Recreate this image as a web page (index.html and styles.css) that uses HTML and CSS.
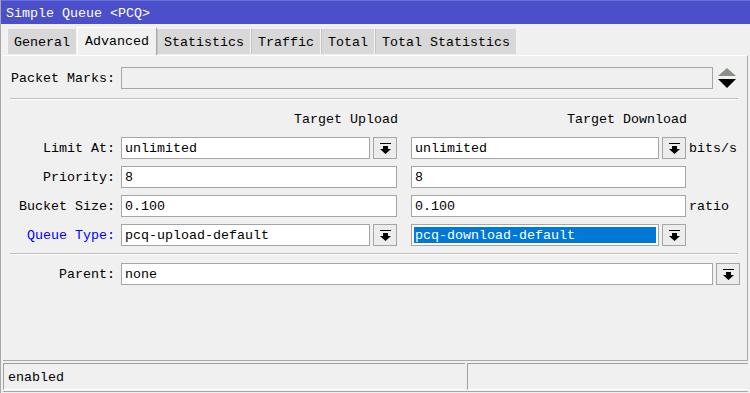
FILE: index.html
```html
<!DOCTYPE html>
<html lang="en">
<head>
    <meta charset="UTF-8">
    <title>Simple Queue &lt;PCQ&gt;</title>
    <link rel="stylesheet" href="styles.css">
</head>
<body>

<div class="window">
    <div class="titlebar">Simple Queue &lt;PCQ&gt;</div>

    <div class="tabs">
        <div class="tab">General</div>
        <div class="tab active">Advanced</div>
        <div class="tab">Statistics</div>
        <div class="tab">Traffic</div>
        <div class="tab">Total</div>
        <div class="tab">Total Statistics</div>
    </div>

    <div class="panel">
        <div class="row">
            <span class="label">Packet Marks:</span>
            <div class="field wide disabled"></div>
            <span class="updown">
                <svg width="18" height="22" viewBox="0 0 18 22">
                    <polygon points="9,1 18,9 0,9" fill="#8a9089"/>
                    <polygon points="0,12 18,12 9,21" fill="#000"/>
                </svg>
            </span>
        </div>

        <div class="sep"></div>

        <div class="row heads">
            <span class="label"></span>
            <span class="head up">Target Upload</span>
            <span class="head down">Target Download</span>
        </div>

        <div class="row">
            <span class="label">Limit At:</span>
            <div class="combo up">
                <div class="field">unlimited</div>
                <span class="btn"><svg width="11" height="11" viewBox="0 0 11 11"><rect x="0" y="0" width="11" height="1"/><rect x="3" y="3" width="5" height="3"/><polygon points="0,6 11,6 5.5,11"/></svg></span>
            </div>
            <div class="combo down">
                <div class="field">unlimited</div>
                <span class="btn"><svg width="11" height="11" viewBox="0 0 11 11"><rect x="0" y="0" width="11" height="1"/><rect x="3" y="3" width="5" height="3"/><polygon points="0,6 11,6 5.5,11"/></svg></span>
            </div>
            <span class="unit">bits/s</span>
        </div>

        <div class="row">
            <span class="label">Priority:</span>
            <div class="field up">8</div>
            <div class="field down">8</div>
        </div>

        <div class="row">
            <span class="label">Bucket Size:</span>
            <div class="field up">0.100</div>
            <div class="field down">0.100</div>
            <span class="unit">ratio</span>
        </div>

        <div class="row">
            <span class="label link">Queue Type:</span>
            <div class="combo up">
                <div class="field">pcq-upload-default</div>
                <span class="btn"><svg width="11" height="11" viewBox="0 0 11 11"><rect x="0" y="0" width="11" height="1"/><rect x="3" y="3" width="5" height="3"/><polygon points="0,6 11,6 5.5,11"/></svg></span>
            </div>
            <div class="combo down">
                <div class="field selected"><span>pcq-download-default</span></div>
                <span class="btn"><svg width="11" height="11" viewBox="0 0 11 11"><rect x="0" y="0" width="11" height="1"/><rect x="3" y="3" width="5" height="3"/><polygon points="0,6 11,6 5.5,11"/></svg></span>
            </div>
        </div>

        <div class="sep"></div>

        <div class="row">
            <span class="label">Parent:</span>
            <div class="field wide">none</div>
            <span class="btn"><svg width="11" height="11" viewBox="0 0 11 11"><rect x="0" y="0" width="11" height="1"/><rect x="3" y="3" width="5" height="3"/><polygon points="0,6 11,6 5.5,11"/></svg></span>
        </div>
    </div>

    <div class="status">
        <div class="cell main">enabled</div>
        <div class="cell rest"></div>
    </div>
</div>

</body>
</html>
```

FILE: styles.css
```css
body {
    margin: 0;
    padding: 0;
    background-color: #f0f0f0;
    font-family: 'Liberation Mono', 'DejaVu Sans Mono', monospace;
    font-size: 13.33px;
    color: #000;
}
.window {
    height: 393px;
    display: flex;
    flex-direction: column;
    border-left: 1px solid #a8a8a8;
    box-sizing: border-box;
    overflow: hidden;
}
.titlebar {
    height: 24px;
    line-height: 25px;
    padding-left: 5px;
    background-color: #4b4fc9;
    border-top: 1px solid #6a6edb;
    box-sizing: border-box;
    color: #fff;
}
.tabs {
    display: flex;
    align-items: flex-end;
    height: 31px;
    padding-left: 6px;
}
.tab {
    height: 25px;
    line-height: 27px;
    padding: 0 6px;
    margin-bottom: 1px;
    background-color: #d8d8d8;
    border-right: 1px solid #f4f4f4;
    border-left: 1px solid #c4c4c4;
    white-space: nowrap;
}
.tab:first-child {
    border-left: 1px solid #f4f4f4;
}
.tab.active {
    height: 28px;
    line-height: 28px;
    padding: 0 7px;
    margin-bottom: 0;
    background-color: #f0f0f0;
    border-left: 1px solid #fff;
    border-top: 1px solid #fff;
    border-right: 1px solid #a8a8a8;
    box-sizing: border-box;
}
.panel {
    height: 306px;
    margin: 0 2px 0 2px;
    padding-top: 11px;
    border-top: 1px solid #fff;
    border-right: 1px solid #a8a8a8;
    border-bottom: 1px solid #a8a8a8;
    box-sizing: border-box;
}
.row {
    display: flex;
    align-items: center;
    height: 22px;
    margin-bottom: 7px;
}
.label {
    width: 118px;
    flex: none;
    padding-right: 6px;
    box-sizing: border-box;
    text-align: right;
    white-space: nowrap;
}
.label.link {
    color: #0000ff;
}
.field {
    height: 22px;
    line-height: 21px;
    padding-left: 3px;
    background-color: #fff;
    border: 1px solid #a5a5a5;
    box-sizing: border-box;
    white-space: nowrap;
    overflow: hidden;
}
.field.disabled {
    background-color: #f0f0f0;
}
.field.wide {
    width: 592px;
    flex: none;
}
.field.up, .combo.up {
    width: 276px;
    flex: none;
}
.field.down, .combo.down {
    width: 275px;
    flex: none;
    margin-left: 14px;
}
.combo {
    display: flex;
    gap: 3px;
}
.combo .field {
    flex: 1;
}
.field.selected {
    padding: 2px;
    line-height: 17px;
}
.field.selected span {
    display: block;
    height: 16px;
    padding-left: 1px;
    background-color: #0078d7;
    color: #fff;
}
.btn {
    width: 24px;
    height: 22px;
    flex: none;
    display: flex;
    align-items: center;
    justify-content: center;
    background-color: #ececec;
    border: 1px solid #a5a5a5;
    box-sizing: border-box;
}
.row > .btn {
    margin-left: 3px;
}
.btn svg {
    fill: #000;
}
.updown {
    margin-left: 5px;
    display: flex;
}
.unit {
    margin-left: 3px;
}
.sep {
    height: 0;
    margin: 2px 9px 8px 7px;
    border-top: 1px solid #bdbdbd;
    border-bottom: 1px solid #fff;
}
.panel > .row:first-child + .sep {
    margin-top: 9px;
}
.heads {
    margin-bottom: 7px;
}
.head {
    text-align: right;
}
.head.up {
    width: 277px;
}
.head.down {
    width: 289px;
    margin-left: 0;
}
.status {
    display: flex;
    gap: 2px;
    margin: 2px 2px 0 2px;
    height: 28px;
    border-bottom: 1px solid #a8a8a8;
}
.cell {
    height: 27px;
    line-height: 28px;
    padding-left: 4px;
    border-top: 1px solid #a0a0a0;
    border-left: 1px solid #a0a0a0;
    border-bottom: 1px solid #fff;
    box-sizing: border-box;
}
.cell.main {
    width: 462px;
}
.cell.rest {
    flex: 1;
}
```
